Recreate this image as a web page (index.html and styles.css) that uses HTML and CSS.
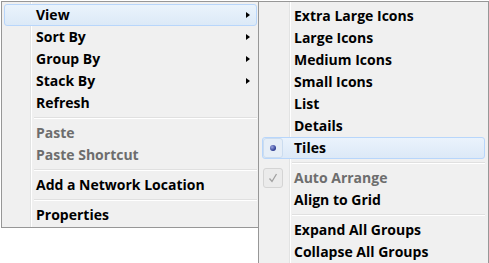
FILE: index.html
```html
<!DOCTYPE html>
<html>
<head>
<meta charset="utf-8">
<link rel="stylesheet" href="styles.css">
</head>
<body>
<div class="desk">
  <div class="menu main">
    <div class="item hot"><span class="label">View</span><span class="arrow"></span></div>
    <div class="item"><span class="label">Sort By</span><span class="arrow"></span></div>
    <div class="item"><span class="label">Group By</span><span class="arrow"></span></div>
    <div class="item"><span class="label">Stack By</span><span class="arrow"></span></div>
    <div class="item"><span class="label">Refresh</span></div>
    <div class="sep"></div>
    <div class="item disabled"><span class="label">Paste</span></div>
    <div class="item disabled"><span class="label">Paste Shortcut</span></div>
    <div class="sep"></div>
    <div class="item"><span class="label">Add a Network Location</span></div>
    <div class="sep"></div>
    <div class="item"><span class="label">Properties</span></div>
  </div>
  <div class="menu sub">
    <div class="item"><span class="label">Extra Large Icons</span></div>
    <div class="item"><span class="label">Large Icons</span></div>
    <div class="item"><span class="label">Medium Icons</span></div>
    <div class="item"><span class="label">Small Icons</span></div>
    <div class="item"><span class="label">List</span></div>
    <div class="item"><span class="label">Details</span></div>
    <div class="item hot"><span class="mark"><span class="bullet"></span></span><span class="label">Tiles</span></div>
    <div class="sep"></div>
    <div class="item disabled"><span class="mark check"><svg width="12" height="12" viewBox="0 0 12 12"><path d="M2.5 6.5 L5 9.5 L9.5 2" fill="none" stroke="#a0a0a0" stroke-width="1.3"/></svg></span><span class="label">Auto Arrange</span></div>
    <div class="item"><span class="label">Align to Grid</span></div>
    <div class="sep"></div>
    <div class="item"><span class="label">Expand All Groups</span></div>
    <div class="item"><span class="label">Collapse All Groups</span></div>
  </div>
</div>
</body>
</html>
```
FILE: styles.css
```css
html, body {
  margin: 0;
  padding: 0;
  background: #ffffff;
  width: 489px;
  height: 263px;
  overflow: hidden;
}
.desk {
  position: relative;
  width: 489px;
  height: 263px;
  font-family: "Open Sans", "Noto Sans", sans-serif;
  font-weight: 700;
  font-size: 14px;
  color: #000;
}
.menu {
  box-sizing: border-box;
  border: 1px solid #979797;
  background-color: #f0f0f0;
  display: flex;
  flex-direction: column;
}
.main {
  margin: 1px 0 0 1px;
  width: 259px;
  height: 227px;
  padding: 2px 2px 1px 2px;
  background-image: linear-gradient(to right, transparent 28px, #e2e3e3 28px, #e2e3e3 29px, #ffffff 29px, #ffffff 30px, transparent 30px);
}
.sub {
  position: absolute;
  left: 258px;
  top: 0;
  width: 231px;
  height: 270px;
  padding: 3px 3px 0 3px;
  background-image: linear-gradient(to right, transparent 30px, #e2e3e3 30px, #e2e3e3 31px, #ffffff 31px, #ffffff 32px, transparent 32px);
}
.item {
  box-sizing: border-box;
  height: 22px;
  line-height: 20px;
  display: flex;
  align-items: center;
  position: relative;
  border: 1px solid transparent;
  border-radius: 3px;
}
.main .item { padding-left: 31px; }
.sub .item { padding-left: 31px; }
.item.hot {
  border-color: #b8d6fb;
  background: linear-gradient(#eaf3fc, #dce9f7);
}
.label { flex: 1; white-space: nowrap; }
.disabled { color: #6d6d6d; }
.arrow {
  width: 0;
  height: 0;
  border-left: 4px solid #000;
  border-top: 3.5px solid transparent;
  border-bottom: 3.5px solid transparent;
  margin-right: 6px;
}
.sep {
  height: 8px;
  box-sizing: border-box;
  margin-left: 30px;
  display: flex;
  flex-direction: column;
  justify-content: center;
}
.sep::before {
  content: "";
  display: block;
  height: 1px;
  background: #e0e0e0;
  border-bottom: 1px solid #ffffff;
}
.mark {
  position: absolute;
  left: 0;
  top: 0;
  width: 20px;
  height: 20px;
  box-sizing: border-box;
  display: flex;
  align-items: center;
  justify-content: center;
  border-radius: 3px;
}
.item.hot .mark {
  border: 1px solid #cbdcef;
  background: #e6eef7;
}
.mark.check {
  border: 1px solid #d4d4d4;
  background: #ebebeb;
}
.bullet {
  width: 6px;
  height: 6px;
  border-radius: 50%;
  background: radial-gradient(circle at 35% 35%, #9aa4e0, #2b3a8f 70%);
}
```
